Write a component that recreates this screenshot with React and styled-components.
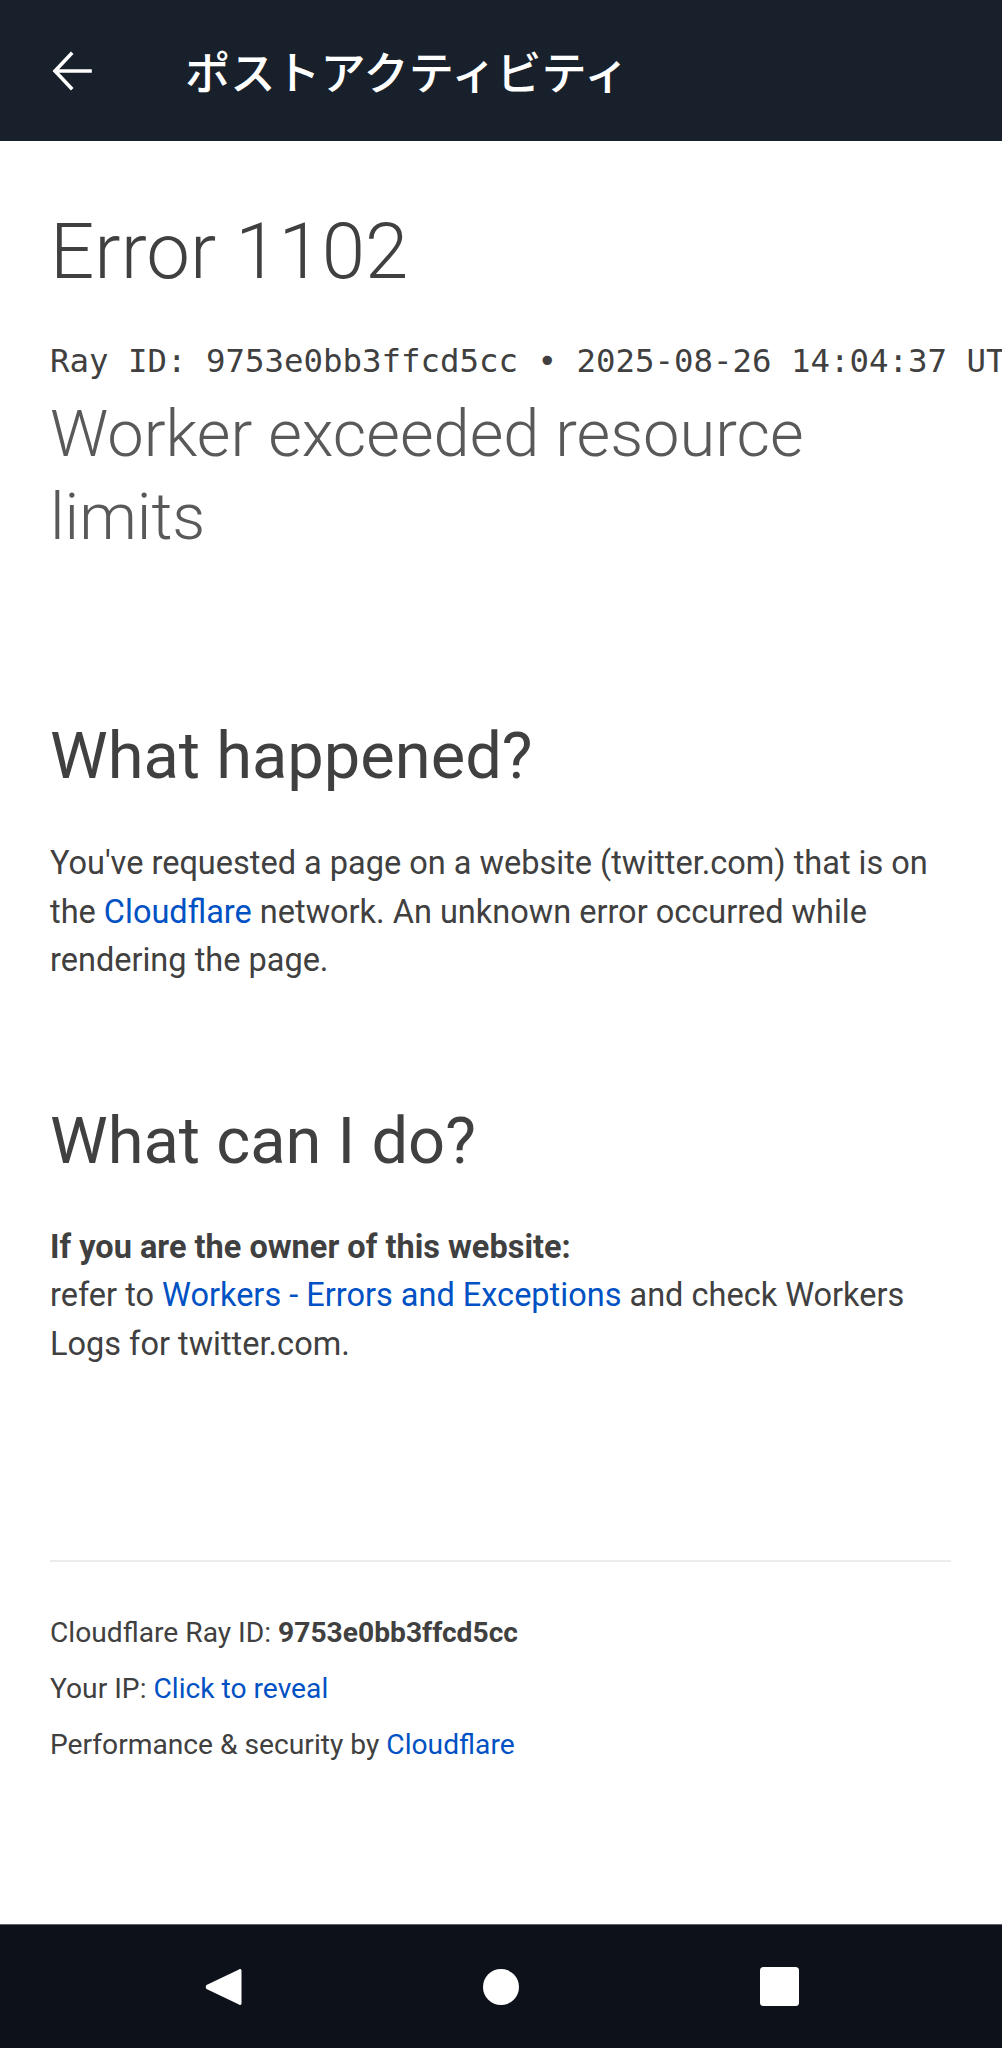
import React from 'react';
import styled, { createGlobalStyle } from 'styled-components';

const GlobalStyle = createGlobalStyle`
  html, body {
    margin: 0;
    padding: 0;
    background: #ffffff;
    overflow-x: hidden;
  }
  body {
    font-family: 'Roboto', 'Liberation Sans', sans-serif;
    color: #404040;
  }
`;

const Screen = styled.div`
  display: flex;
  flex-direction: column;
  height: 2048px;
  width: 1002px;
  overflow: hidden;
`;

const AppBar = styled.header`
  flex: 0 0 141px;
  display: flex;
  align-items: center;
  gap: 93px;
  padding-left: 52px;
  background: #18202b;
  color: #ffffff;
`;

const Title = styled.h1`
  margin: 0;
  font-family: 'Noto Sans CJK JP', 'Noto Sans', sans-serif;
  font-weight: 500;
  font-size: 45.2px;
  line-height: 1;
`;

const Page = styled.main`
  flex: 1;
  padding: 63px 51px 0 50px;
  display: flex;
  flex-direction: column;
`;

const ErrorCode = styled.h1`
  margin: 0;
  font-weight: 300;
  font-size: 78px;
  line-height: 96px;
  color: #404040;
`;

const RayLine = styled.div`
  margin-top: 41px;
  font-family: 'DejaVu Sans Mono', 'Liberation Mono', monospace;
  font-size: 32.4px;
  line-height: 40px;
  white-space: nowrap;
  color: #404040;
`;

const Subtitle = styled.h2`
  margin: 12px 0 0;
  font-weight: 300;
  font-size: 65px;
  line-height: 83px;
  color: #595959;
`;

const SectionTitle = styled.h2`
  margin: ${(p) => p.$top}px 0 0;
  font-weight: 400;
  font-size: 65px;
  line-height: 78px;
  color: #404040;
`;

const Para = styled.p`
  margin: ${(p) => p.$top || 0}px 0 0;
  font-size: 32.5px;
  line-height: 48.5px;
  color: #404040;
`;

const Link = styled.a`
  color: #0051c3;
  text-decoration: none;
`;

const Divider = styled.hr`
  margin: 192px 0 0;
  border: 0;
  height: 2px;
  background: #ececec;
`;

const Footer = styled.footer`
  margin-top: 43px;
  display: flex;
  flex-direction: column;
`;

const FooterLine = styled.p`
  margin: 0;
  font-size: 28.2px;
  line-height: 56px;
  color: #404040;
`;

const NavBar = styled.nav`
  flex: 0 0 123px;
  display: flex;
  justify-content: center;
  align-items: center;
  gap: 218px;
  background: #0d121a;
  border-top: 1px solid #5f646b;
`;

const NavButton = styled.div`
  width: 60px;
  height: 60px;
  display: flex;
  align-items: center;
  justify-content: center;
`;

const BackArrow = () => (
  <svg width="40" height="40" viewBox="0 0 40 40" fill="none">
    <path
      d="M38 20H4M19 3L3 20l16 17"
      stroke="#fff"
      strokeWidth="3.6"
      strokeLinecap="square"
    />
  </svg>
);

const App = () => (
  <>
    <GlobalStyle />
    <Screen>
      <AppBar>
        <BackArrow />
        <Title>ポストアクティビティ</Title>
      </AppBar>

      <Page>
        <ErrorCode>Error 1102</ErrorCode>
        <RayLine>Ray ID: 9753e0bb3ffcd5cc • 2025-08-26 14:04:37 UTC</RayLine>
        <Subtitle>Worker exceeded resource limits</Subtitle>

        <SectionTitle $top={158}>What happened?</SectionTitle>
        <Para $top={44}>
          You've requested a page on a website (twitter.com) that is on the{' '}
          <Link href="#">Cloudflare</Link> network. An unknown error occurred
          while rendering the page.
        </Para>

        <SectionTitle $top={117}>What can I do?</SectionTitle>
        <Para $top={43}>
          <strong>If you are the owner of this website:</strong>
          <br />
          refer to <Link href="#">Workers - Errors and Exceptions</Link> and
          check Workers Logs for twitter.com.
        </Para>

        <Divider />

        <Footer>
          <FooterLine>
            Cloudflare Ray ID: <strong>9753e0bb3ffcd5cc</strong>
          </FooterLine>
          <FooterLine>
            Your IP: <Link href="#">Click to reveal</Link>
          </FooterLine>
          <FooterLine>
            Performance &amp; security by <Link href="#">Cloudflare</Link>
          </FooterLine>
        </Footer>
      </Page>

      <NavBar>
        <NavButton>
          <svg width="40" height="42" viewBox="0 0 40 42">
            <path
              d="M36 3.5c1 -1 2.5 -0.4 2.5 1v33c0 1.4 -1.5 2 -2.5 1L3.5 23c-1 -1 -1 -3 0 -4z"
              fill="#fff"
            />
          </svg>
        </NavButton>
        <NavButton>
          <svg width="36" height="36" viewBox="0 0 36 36">
            <circle cx="18" cy="18" r="18" fill="#fff" />
          </svg>
        </NavButton>
        <NavButton>
          <svg width="39" height="39" viewBox="0 0 39 39">
            <rect width="39" height="39" rx="3.5" fill="#fff" />
          </svg>
        </NavButton>
      </NavBar>
    </Screen>
  </>
);

export default App;
